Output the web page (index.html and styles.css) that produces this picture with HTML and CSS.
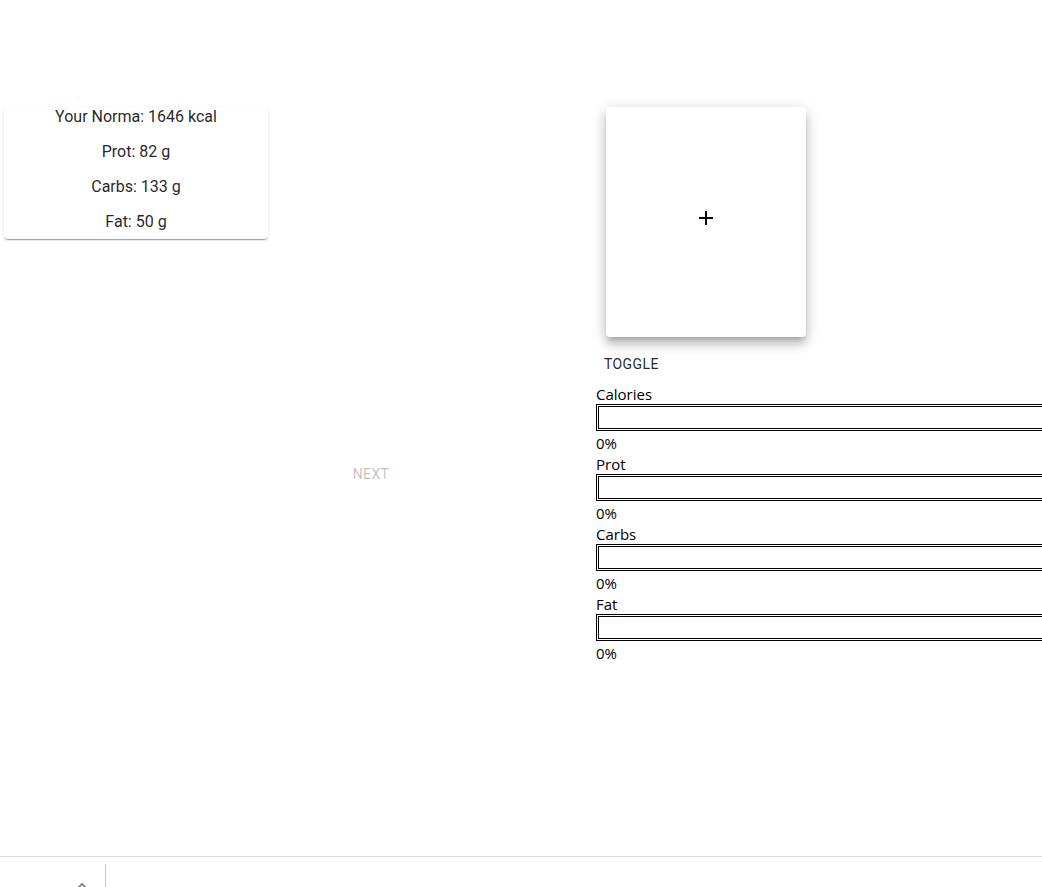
FILE: index.html
```html
<!DOCTYPE html>
<html>
<head>
<meta charset="utf-8">
<link rel="stylesheet" href="styles.css">
</head>
<body>
<div class="page">
  <main class="main">
    <section class="left">
      <div class="norma-card">
        <p>Your Norma: 1646 kcal</p>
        <p>Prot: 82 g</p>
        <p>Carbs: 133 g</p>
        <p>Fat: 50 g</p>
      </div>
      <button class="btn btn-next" disabled>Next</button>
    </section>
    <section class="right">
      <div class="add-card">
        <svg width="16" height="16" viewBox="0 0 16 16"><path d="M8 1V15M1 8H15" stroke="#000" stroke-width="2" fill="none"/></svg>
      </div>
      <button class="btn btn-toggle">Toggle</button>
      <div class="progress-list">
        <div class="prog">
          <div class="prog-label">Calories</div>
          <div class="prog-bar"></div>
          <div class="prog-val">0%</div>
        </div>
        <div class="prog">
          <div class="prog-label">Prot</div>
          <div class="prog-bar"></div>
          <div class="prog-val">0%</div>
        </div>
        <div class="prog">
          <div class="prog-label">Carbs</div>
          <div class="prog-bar"></div>
          <div class="prog-val">0%</div>
        </div>
        <div class="prog">
          <div class="prog-label">Fat</div>
          <div class="prog-bar"></div>
          <div class="prog-val">0%</div>
        </div>
      </div>
    </section>
  </main>
  <footer class="footer">
    <div class="footer-left">
      <svg class="chev" width="12" height="8" viewBox="0 0 12 8"><path d="M2 7L6 3L10 7" stroke="#777" stroke-width="1.6" fill="none"/></svg>
    </div>
    <div class="footer-divider"></div>
  </footer>
</div>
</body>
</html>
```
FILE: styles.css
```css
html, body {
  margin: 0;
  padding: 0;
  background: #fff;
  overflow: hidden;
}
.page {
  width: 1042px;
  height: 887px;
  display: flex;
  flex-direction: column;
  font-family: Roboto, "Liberation Sans", sans-serif;
  overflow: hidden;
}
.main {
  flex: 1;
  display: flex;
  padding-top: 107px;
  min-height: 0;
}
.left {
  width: 596px;
  flex: none;
  display: flex;
  flex-direction: column;
  align-items: flex-start;
}
.norma-card {
  margin-left: 4px;
  width: 264px;
  padding: 1px 0 8px;
  box-sizing: border-box;
  background: #fff;
  border-radius: 4px;
  box-shadow: 0 2px 1px -1px rgba(0,0,0,0.2), 0 1px 1px 0 rgba(0,0,0,0.14), 0 1px 3px 0 rgba(0,0,0,0.12);
  display: flex;
  flex-direction: column;
  gap: 17px;
  text-align: center;
  color: rgba(0,0,0,0.87);
  font-size: 16px;
}
.norma-card p {
  margin: 0;
  line-height: 18px;
}
.btn {
  font-family: Roboto, "Liberation Sans", sans-serif;
  font-size: 14px;
  font-weight: 500;
  letter-spacing: 0.02857em;
  text-transform: uppercase;
  background: none;
  border: 0;
  padding: 6px 8px;
  min-width: 64px;
  height: 36px;
  line-height: 24px;
  border-radius: 4px;
  cursor: pointer;
}
.btn-next {
  margin-top: 217px;
  margin-left: 339px;
  color: rgba(0,0,0,0.26);
  font-weight: 400;
  cursor: default;
}
.right {
  flex: 1;
  display: flex;
  flex-direction: column;
  align-items: flex-start;
  min-width: 0;
}
.add-card {
  margin-left: 10px;
  margin-bottom: 4px;
  width: 200px;
  height: 230px;
  padding-bottom: 8px;
  box-sizing: border-box;
  background: #fff;
  border-radius: 4px;
  box-shadow: 0 5px 5px -3px rgba(0,0,0,0.2), 0 8px 10px 1px rgba(0,0,0,0.14), 0 3px 14px 2px rgba(0,0,0,0.12);
  display: flex;
  align-items: center;
  justify-content: center;
}
.btn-toggle {
  margin-top: 5px;
  color: rgba(0,0,0,0.87);
  font-weight: 400;
}
.progress-list {
  margin-top: 0.5px;
  display: flex;
  flex-direction: column;
  font-family: "Open Sans", "Noto Sans", sans-serif;
  font-size: 15px;
  color: #000;
  width: 100%;
  overflow: hidden;
}
.prog-label, .prog-val {
  line-height: 20px;
  padding-top: 1.5px;
  height: 21.5px;
  box-sizing: border-box;
}
.prog-bar {
  width: 460px;
  height: 27px;
  box-sizing: border-box;
  border: 3px double #000;
}
.footer {
  height: 30px;
  flex: none;
  border-top: 1px solid #dcdcdc;
  display: flex;
  align-items: flex-end;
}
.footer-left {
  width: 105px;
  height: 23px;
  display: flex;
  align-items: flex-end;
  justify-content: flex-end;
}
.chev {
  margin-right: 17px;
  margin-bottom: -2px;
}
.footer-divider {
  width: 1px;
  height: 23px;
  background: #c8c8c8;
}
```
